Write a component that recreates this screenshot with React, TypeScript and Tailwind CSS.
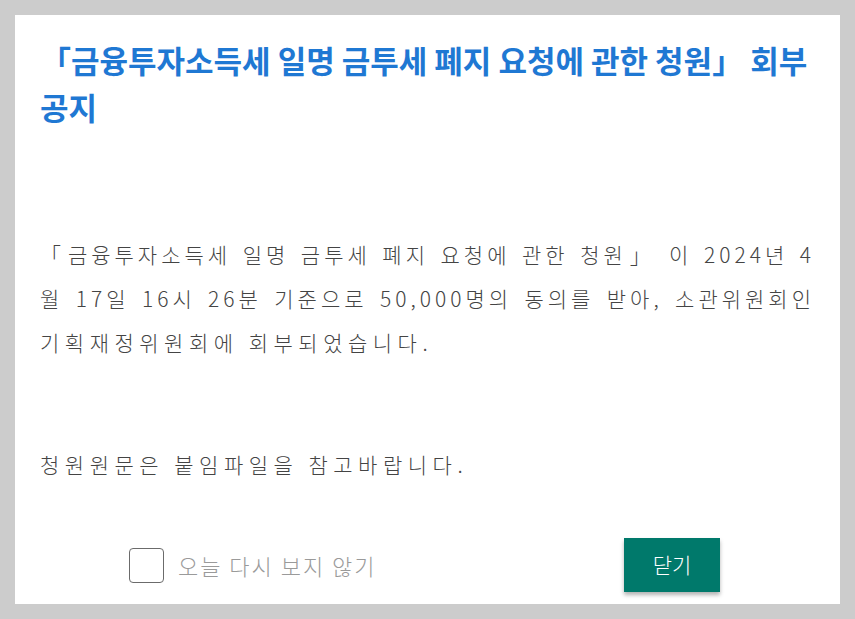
import { useState } from "react";

const KR = "font-['Noto_Sans_CJK_KR','Noto_Sans',sans-serif]";

// 본문 한 줄: 꽉 찬 줄은 양끝 정렬, 마지막 줄은 왼쪽 정렬
function Line({ children, last }: { children: string; last?: boolean }) {
  return (
    <span
      className={`block whitespace-nowrap ${
        last ? "tracking-[5.5px]" : "tracking-[4px] text-justify [text-align-last:justify]"
      }`}
    >
      {children}
    </span>
  );
}

export default function App() {
  const [hideToday, setHideToday] = useState(false);

  return (
    <div className={`flex h-screen flex-col bg-[#cccccc] p-[15px] ${KR}`}>
      <div className="flex flex-1 flex-col bg-white px-[25px]">
        <h1 className="pt-[21px] text-[31px] font-bold leading-[47px] text-[#1f78d3]">
          「금융투자소득세 일명 금투세 폐지 요청에 관한 청원」 회부 공지
        </h1>

        <p className="mt-[102px] text-[21px] font-light leading-[44px] text-[#444444]">
          <Line>「금융투자소득세 일명 금투세 폐지 요청에 관한 청원」 이 2024년 4</Line>
          <Line>월 17일 16시 26분 기준으로 50,000명의 동의를 받아, 소관위원회인</Line>
          <Line last>기획재정위원회에 회부되었습니다.</Line>
        </p>

        <p className="mt-[78px] text-[21px] font-light leading-[44px] text-[#444444]">
          <Line last>청원원문은 붙임파일을 참고바랍니다.</Line>
        </p>

        <div className="mt-auto mb-[12px] flex items-center">
          <label className="ml-[89px] flex cursor-pointer items-center gap-[14px]">
            <input
              type="checkbox"
              checked={hideToday}
              onChange={(e) => setHideToday(e.target.checked)}
              className="sr-only"
            />
            <span className="flex h-[35px] w-[35px] items-center justify-center rounded-[4px] border-[1.5px] border-[#6b6b6b] bg-white">
              {hideToday && (
                <svg viewBox="0 0 24 24" className="h-6 w-6 text-[#00796b]">
                  <path d="M5 12l5 5 9-10" fill="none" stroke="currentColor" strokeWidth="2.5" />
                </svg>
              )}
            </span>
            <span className="text-[22px] font-light tracking-[2px] text-[#9a9a9a]">
              오늘 다시 보지 않기
            </span>
          </label>

          <button className="mr-[95px] ml-auto h-[54px] w-[96px] bg-[#00796b] text-[21px] font-light text-white shadow-[0_3px_4px_rgba(0,0,0,0.3)]">
            닫기
          </button>
        </div>
      </div>
    </div>
  );
}
